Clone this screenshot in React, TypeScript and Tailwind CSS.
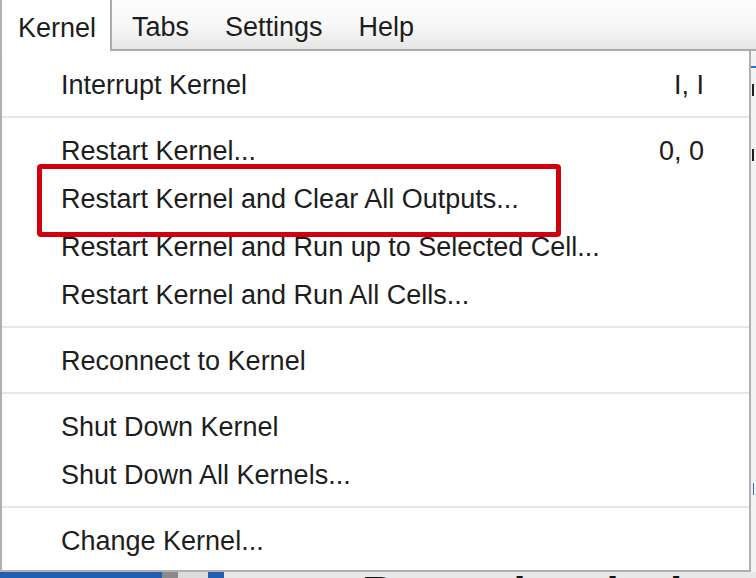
import React from "react"

type Item = { label: string; shortcut?: string }

const groups: Item[][] = [
  [{ label: "Interrupt Kernel", shortcut: "I, I" }],
  [
    { label: "Restart Kernel...", shortcut: "0, 0" },
    { label: "Restart Kernel and Clear All Outputs..." },
    { label: "Restart Kernel and Run up to Selected Cell..." },
    { label: "Restart Kernel and Run All Cells..." },
  ],
  [{ label: "Reconnect to Kernel" }],
  [{ label: "Shut Down Kernel" }, { label: "Shut Down All Kernels..." }],
  [{ label: "Change Kernel..." }],
]

function MenuRow({ item }: { item: Item }) {
  return (
    <div className="flex h-[48px] items-center justify-between pl-[59px] pr-[45px]">
      <span>{item.label}</span>
      {item.shortcut && <span>{item.shortcut}</span>}
    </div>
  )
}

export default function App() {
  return (
    <div className="relative h-[578px] w-[756px] overflow-hidden bg-[#ebebeb] font-['Liberation_Sans',Arial,sans-serif] text-[27px] text-[#1d1d1d]">
      {/* menubar */}
      <div className="flex h-[51px]">
        <div className="flex w-[110px] shrink-0 items-center border-l-2 border-[#b3b3b3] bg-white pl-[16px] pt-[5px]">
          Kernel
        </div>
        <div className="flex flex-1 items-center gap-[36px] border-b-2 border-l-2 border-[#acacac] bg-gradient-to-b from-[#fdfdfd] via-[#f8f8f8] to-[#e6e6e6] pl-[20px] pt-[5px]">
          <span>Tabs</span>
          <span>Settings</span>
          <span>Help</span>
        </div>
      </div>

      <div className="flex h-[521px]">
        {/* dropdown */}
        <div className="w-[751px] shrink-0 border-b-2 border-l-2 border-r-2 border-[#b0b0b0] bg-white pb-[5px] pt-[10px]">
          {groups.map((g, gi) => (
            <div key={gi}>
              {gi > 0 && <div className="mb-[9px] mt-[7px] h-[2px] bg-[#e6e6e6]" />}
              {g.map((it) => (
                <MenuRow key={it.label} item={it} />
              ))}
            </div>
          ))}
        </div>
        {/* page behind, right edge */}
        <div className="relative flex-1 bg-[#f4f4f4]">
          <div className="absolute left-0 top-[15px] h-[2px] w-full bg-[#2a6fd6]" />
          <div className="absolute left-[1px] top-[33px] h-[12px] w-[2px] bg-[#222]" />
          <div className="absolute left-[1px] top-[98px] h-[12px] w-[2px] bg-[#222]" />
          <div className="absolute left-[2px] top-[432px] h-[12px] w-[1px] bg-[#2a6fd6]" />
        </div>
      </div>

      {/* bottom edge of page behind */}
      <div className="flex h-[6px] items-start">
        <div className="h-full w-[162px] bg-[#1f5fad]" />
        <div className="h-full w-[16px] bg-[#8a8a8a]" />
        <div className="h-full w-[30px] bg-[#dcdcdc]" />
        <div className="h-full w-[16px] bg-[#1f5fad]" />
        <div className="relative h-full flex-1 bg-[#e8e8e8]">
          <span className="absolute left-[138px] top-[-1px] whitespace-nowrap text-[44px] font-bold leading-none text-[#111]">
            Restarting the kernel
          </span>
        </div>
      </div>

      {/* annotation */}
      <div className="absolute left-[37px] top-[164px] h-[73px] w-[524px] rounded-[4px] border-[5px] border-[#d0000f]" />
    </div>
  )
}
